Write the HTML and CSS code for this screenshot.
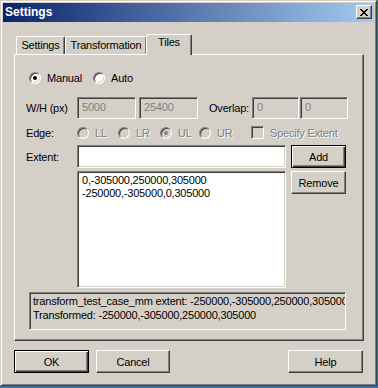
FILE: index.html
```html
<!DOCTYPE html>
<html lang="en">
<head>
  <meta charset="UTF-8">
  <title>Settings</title>
  <link rel="stylesheet" href="styles.css">
</head>
<body>
  <div class="window">
    <!-- title bar -->
    <div class="titlebar">
      <span class="title">Settings</span>
      <span class="close">
        <svg width="8" height="7" viewBox="0 0 8 7" shape-rendering="crispEdges"><path d="M0 0h2v1H0z M6 0h2v1H6z M1 1h2v1H1z M5 1h2v1H5z M2 2h4v1H2z M3 3h2v1H3z M2 4h4v1H2z M1 5h2v1H1z M5 5h2v1H5z M0 6h2v1H0z M6 6h2v1H6z" fill="#000"/></svg>
      </span>
    </div>

    <div class="dialog">
      <div class="tabs">
        <div class="tab tab-settings">Settings</div>
        <div class="tab tab-transform">Transformation</div>
        <div class="tab active">Tiles</div>
      </div>

      <div class="panel">
        <div class="row mode">
          <label class="opt opt-manual"><span class="radio on"></span>Manual</label>
          <label class="opt"><span class="radio"></span>Auto</label>
        </div>

        <div class="row size">
          <span class="lbl">W/H (px)</span>
          <span class="field off w-wh">5000</span>
          <span class="field off w-wh gap3">25400</span>
          <span class="lbl lbl-overlap">Overlap:</span>
          <span class="field off w-ov1">0</span>
          <span class="field off w-ov2">0</span>
        </div>

        <div class="row edge">
          <span class="lbl">Edge:</span>
          <label class="opt dim e1"><span class="radio off"></span>LL</label>
          <label class="opt dim e2"><span class="radio off"></span>LR</label>
          <label class="opt dim e3"><span class="radio off on"></span>UL</label>
          <label class="opt dim e4"><span class="radio off"></span>UR</label>
          <label class="opt dim"><span class="check"></span>Specify Extent</label>
        </div>

        <div class="row extent">
          <span class="lbl">Extent:</span>
          <span class="field w-extent"></span>
          <span class="btn default side">Add</span>
        </div>

        <div class="row listrow">
          <div class="list">
            <div>0,-305000,250000,305000</div>
            <div>-250000,-305000,0,305000</div>
          </div>
          <span class="btn side">Remove</span>
        </div>

        <div class="status">
          <div>transform_test_case_mm extent: -250000,-305000,250000,305000</div>
          <div>Transformed: -250000,-305000,250000,305000</div>
        </div>
      </div>

      <div class="actions">
        <span class="btn default act">OK</span>
        <span class="btn act cancel">Cancel</span>
        <span class="btn act help">Help</span>
      </div>
    </div>
  </div>
</body>
</html>
```

FILE: styles.css
```css
body {
  margin: 0;
  background: #3a6ea5;
  font-family: "Liberation Sans", Arial, sans-serif;
  font-size: 11px;
  letter-spacing: -0.2px;
  color: #000;
}

/* window frame */
.window {
  box-sizing: border-box;
  width: 377px;
  height: 386px;
  padding: 2px;
  background: #d4d0c8;
  border: 1px solid;
  border-color: #d4d0c8 #404040 #404040 #d4d0c8;
  box-shadow: inset 1px 1px #fff, inset -1px -1px #808080;
}
.titlebar {
  height: 19px;
  display: flex;
  justify-content: space-between;
  align-items: flex-start;
  background: linear-gradient(to right, #0a246a, #a6caf0);
}
.title {
  color: #fff;
  font-weight: bold;
  font-size: 12px;
  letter-spacing: 0;
  line-height: 19px;
  padding-left: 2px;
}
.close {
  box-sizing: border-box;
  width: 16px;
  height: 14px;
  margin: 2px 2px 0 0;
  display: flex;
  align-items: center;
  justify-content: center;
  background: #d4d0c8;
  border: 1px solid;
  border-color: #fff #404040 #404040 #fff;
  box-shadow: inset -1px -1px #808080;
}

.dialog { padding: 12px 0 0 11px; }

/* tabs */
.tabs {
  display: flex;
  align-items: flex-end;
  height: 20px;
  padding-left: 2px;
}
.tab {
  box-sizing: border-box;
  height: 18px;
  padding-top: 2px;
  line-height: 13px;
  text-align: center;
  border: 1px solid #fff;
  border-right-color: #404040;
  border-bottom: 0;
  border-radius: 2px 2px 0 0;
  box-shadow: inset -1px 0 #808080;
}
.tab-settings { width: 49px; }
.tab-transform { width: 82px; }
.tab.active {
  width: 46px;
  height: 21px;
  margin: 0 0 -1px -1px;
  padding-top: 1px;
  background: #d4d0c8;
  position: relative;
  z-index: 1;
}

.panel {
  box-sizing: border-box;
  width: 350px;
  height: 287px;
  border: 1px solid;
  border-color: #fff #404040 #404040 #fff;
  box-shadow: inset -1px -1px #808080;
}

.row { display: flex; align-items: center; }
.lbl { width: 51px; white-space: nowrap; }
.mode { margin-top: 17px; height: 12px; padding-left: 14px; }
.size { margin-top: 13px; height: 22px; padding-left: 11px; }
.edge { margin-top: 7px; height: 13px; padding-left: 11px; }
.extent { margin-top: 6px; height: 23px; padding-left: 11px; }
.listrow { margin-top: 3px; padding-left: 62px; align-items: flex-start; }

/* radio / check */
.opt { display: flex; align-items: center; gap: 6px; white-space: nowrap; }
.opt-manual { width: 64px; }
.e1 { width: 41px; }
.e2 { width: 42px; }
.e3 { width: 39px; }
.e4 { width: 52px; }
.dim { color: #808080; text-shadow: 1px 1px #fff; }
.radio {
  box-sizing: border-box;
  width: 12px;
  height: 12px;
  flex: none;
  border-radius: 50%;
  border: 1px solid;
  border-color: #808080 #fff #fff #808080;
  box-shadow: inset 1px 1px #404040, inset -1px -1px #d4d0c8;
  background: #fff;
  position: relative;
}
.radio.on::after {
  content: "";
  position: absolute;
  left: 3px;
  top: 3px;
  width: 4px;
  height: 4px;
  border-radius: 50%;
  background: #000;
}
.radio.off { background: #d4d0c8; }
.radio.off.on::after { background: #808080; }
.check {
  box-sizing: border-box;
  width: 13px;
  height: 13px;
  flex: none;
  border: 1px solid;
  border-color: #808080 #fff #fff #808080;
  box-shadow: inset 1px 1px #404040, inset -1px -1px #d4d0c8;
  background: #d4d0c8;
}

/* edit fields */
.field {
  box-sizing: border-box;
  height: 22px;
  padding-left: 4px;
  line-height: 18px;
  border: 1px solid;
  border-color: #808080 #fff #fff #808080;
  box-shadow: inset 1px 1px #404040, inset -1px -1px #d4d0c8;
  background: #fff;
}
.field.off { background: #d4d0c8; color: #808080; }
.w-wh { width: 59px; }
.gap3 { margin-left: 3px; }
.lbl-overlap { width: 43px; margin-left: 11px; }
.w-ov1 { width: 47px; }
.w-ov2 { width: 48px; margin-left: 1px; }
.w-extent { width: 209px; height: 23px; }

.list {
  box-sizing: border-box;
  width: 209px;
  height: 117px;
  padding: 2px 4px;
  line-height: 13px;
  border: 1px solid;
  border-color: #808080 #fff #fff #808080;
  box-shadow: inset 1px 1px #404040, inset -1px -1px #d4d0c8;
  background: #fff;
}

.status {
  box-sizing: border-box;
  width: 317px;
  height: 38px;
  margin: 4px 0 0 14px;
  padding: 1px 3px;
  line-height: 14px;
  white-space: nowrap;
  overflow: hidden;
  border: 1px solid;
  border-color: #808080 #fff #fff #808080;
  box-shadow: inset 1px 1px #404040, inset -1px -1px #d4d0c8;
}

/* push buttons */
.btn {
  box-sizing: border-box;
  display: flex;
  align-items: center;
  justify-content: center;
  height: 23px;
  background: #d4d0c8;
  border: 1px solid;
  border-color: #fff #404040 #404040 #fff;
  box-shadow: inset -1px -1px #808080;
}
.btn.default {
  border-color: #000;
  box-shadow: inset 1px 1px #fff, inset -1px -1px #404040, inset -2px -2px #808080;
}
.side { width: 55px; margin-left: 5px; }

.actions { display: flex; width: 349px; margin-top: 9px; }
.act { width: 75px; }
.cancel { width: 74px; margin-left: 7px; }
.help { margin-left: auto; }
```
